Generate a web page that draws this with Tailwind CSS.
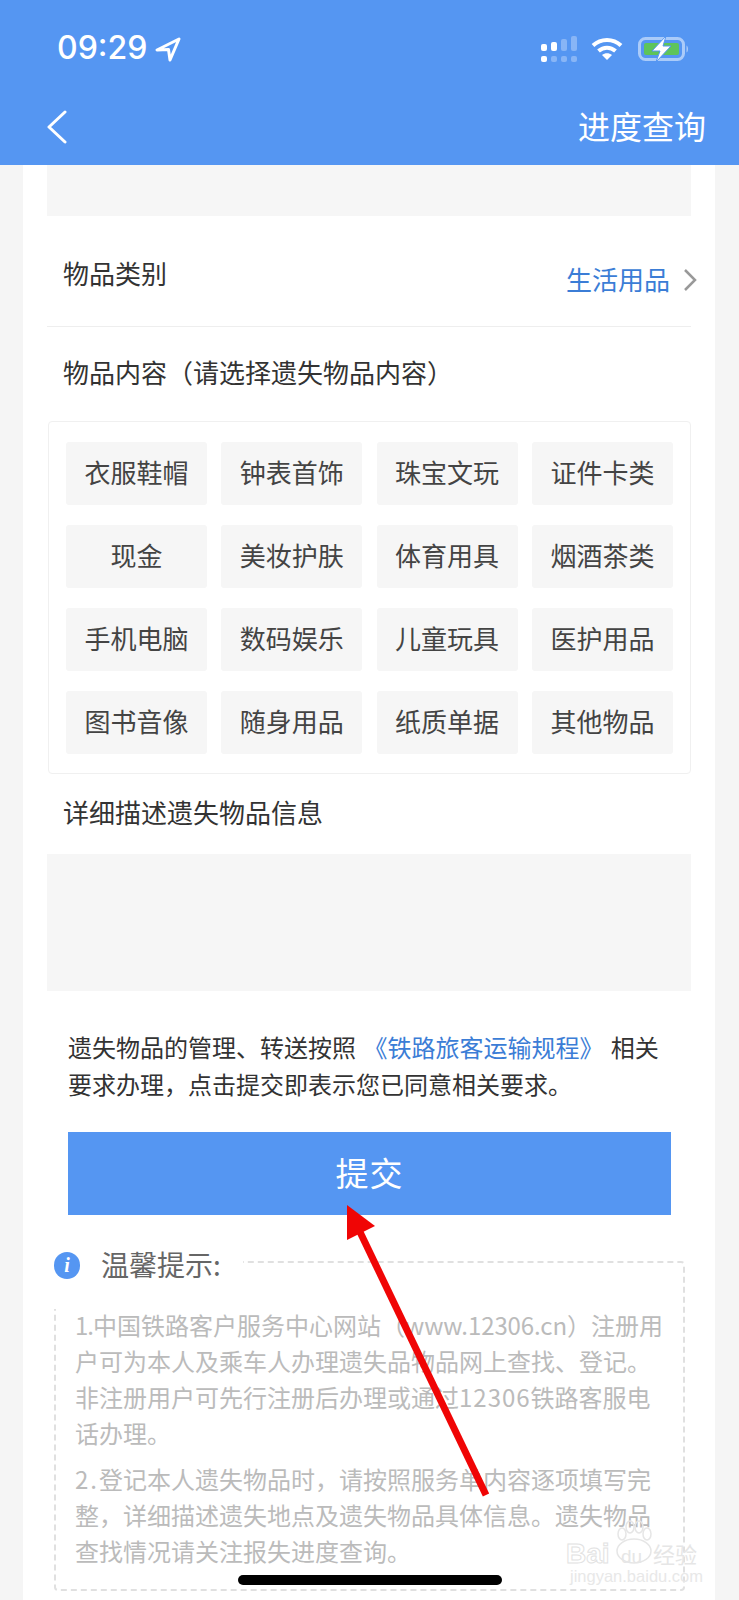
<!DOCTYPE html>
<html lang="zh-CN">

<head>
    <meta charset="UTF-8">
    <title>进度查询</title>
    <meta name="viewport" content="width=device-width, initial-scale=1.0">
    <script src="https://cdn.jsdelivr.net/npm/@tailwindcss/browser@4"></script>
</head>

<body class="bg-[#f5f5f5]">
    <div class="relative w-[739px] h-[1600px] overflow-hidden bg-[#f5f5f5] font-['Noto_Sans_CJK_SC','Noto_Sans',sans-serif]">

        <!-- header -->
        <header class="h-[165px] bg-[#5596f2] text-white">
            <div class="h-[98px] pl-[57px] pr-[50px] flex justify-between items-center">
                <div class="flex items-center gap-[8px]">
                    <span class="font-['Inter'] font-medium text-[32px] leading-none -mt-[2px]">09:29</span>
                    <svg width="26" height="26" viewBox="0 0 26 26" fill="none" stroke="white" stroke-width="3" stroke-linejoin="round">
                        <path d="M2 14 L24 3 L15 24 L13.5 13.5 Z" />
                    </svg>
                </div>
                <div class="flex items-center gap-[13px]">
                    <svg width="37" height="26" viewBox="0 0 37 26" fill="white">
                        <rect x="0" y="8" width="6" height="7" rx="2" />
                        <rect x="10" y="6" width="6" height="9" rx="2" />
                        <rect x="20" y="3" width="6" height="12" rx="2" fill-opacity=".3" />
                        <rect x="30" y="0" width="6" height="15" rx="2" fill-opacity=".3" />
                        <rect x="0" y="20" width="6" height="6" rx="2" />
                        <rect x="10" y="20" width="6" height="6" rx="2" fill-opacity=".3" />
                        <rect x="20" y="20" width="6" height="6" rx="2" fill-opacity=".3" />
                        <rect x="30" y="20" width="6" height="6" rx="2" fill-opacity=".3" />
                    </svg>
                    <svg width="32" height="24" viewBox="0 0 32 24" fill="none" stroke="white" stroke-width="4">
                        <path d="M2 8.5 C10 1 22 1 30 8.5" />
                        <path d="M7.5 14 C12.5 9.5 19.5 9.5 24.5 14" />
                        <path d="M11 18 L16 23 L21 18 C18 15.5 14 15.5 11 18 Z" fill="white" stroke="none" />
                    </svg>
                    <svg width="51" height="26" viewBox="0 0 51 26" class="ml-[2px]">
                        <rect x="1.5" y="2.5" width="44" height="21" rx="6" fill="none" stroke="white" stroke-opacity=".5" stroke-width="3" />
                        <rect x="6" y="7" width="35" height="12" rx="2" fill="#5ec45a" />
                        <path d="M48.5 9.5 C50.5 10.5 50.5 15.5 48.5 16.5 Z" fill="white" fill-opacity=".5" />
                        <path d="M28 0 L14 15 L22 15 L18 26 L33 10 L25 10 Z" fill="white" stroke="#5596f2" stroke-width="1" />
                    </svg>
                </div>
            </div>
            <div class="h-[67px] pl-[46px] pr-[33px] flex justify-between items-start">
                <svg width="22" height="34" viewBox="0 0 22 34" fill="none" stroke="white" stroke-width="3" stroke-linecap="round" stroke-linejoin="round" class="mt-[12px]">
                    <path d="M19 2 L3 17 L19 32" />
                </svg>
                <span class="text-[32px] leading-[58px] -mt-[2px]">进度查询</span>
            </div>
        </header>

        <!-- card -->
        <main class="mx-[23px] w-[692px] h-[1435px] bg-white px-[24px]">
            <div class="h-[51px] bg-[#f6f6f6]"></div>

            <div class="h-[111px] border-b border-[#eeeeee] flex justify-between">
                <span class="pl-[16px] pt-[32px] text-[26px] leading-[50px] text-[#333333]">物品类别</span>
                <div class="flex items-center gap-[13px] pt-[15px] -mr-[6px]">
                    <span class="text-[26px] text-[#3b7dd6]">生活用品</span>
                    <svg width="14" height="24" viewBox="0 0 14 24" fill="none" stroke="#999999" stroke-width="2.5" class="mt-[2px]">
                        <path d="M2 2 L12 12 L2 22" />
                    </svg>
                </div>
            </div>

            <div class="h-[90px] mb-[4px] pl-[16px] pb-[1px] flex items-center text-[26px] text-[#333333]">物品内容（请选择遗失物品内容）</div>

            <div class="h-[353px] ml-[1px] w-[643px] border border-[#f0f0f0] rounded-[4px] pl-[17px] pt-[20px] grid grid-cols-[repeat(4,141px)] auto-rows-[63px] gap-x-[14.3px] gap-y-[20px] text-[26px] text-[#444444]">
                <div class="bg-[#f6f6f6] rounded-[3px] pb-[5px] flex items-center justify-center">衣服鞋帽</div>
                <div class="bg-[#f6f6f6] rounded-[3px] pb-[5px] flex items-center justify-center">钟表首饰</div>
                <div class="bg-[#f6f6f6] rounded-[3px] pb-[5px] flex items-center justify-center">珠宝文玩</div>
                <div class="bg-[#f6f6f6] rounded-[3px] pb-[5px] flex items-center justify-center">证件卡类</div>
                <div class="bg-[#f6f6f6] rounded-[3px] pb-[5px] flex items-center justify-center">现金</div>
                <div class="bg-[#f6f6f6] rounded-[3px] pb-[5px] flex items-center justify-center">美妆护肤</div>
                <div class="bg-[#f6f6f6] rounded-[3px] pb-[5px] flex items-center justify-center">体育用具</div>
                <div class="bg-[#f6f6f6] rounded-[3px] pb-[5px] flex items-center justify-center">烟酒茶类</div>
                <div class="bg-[#f6f6f6] rounded-[3px] pb-[5px] flex items-center justify-center">手机电脑</div>
                <div class="bg-[#f6f6f6] rounded-[3px] pb-[5px] flex items-center justify-center">数码娱乐</div>
                <div class="bg-[#f6f6f6] rounded-[3px] pb-[5px] flex items-center justify-center">儿童玩具</div>
                <div class="bg-[#f6f6f6] rounded-[3px] pb-[5px] flex items-center justify-center">医护用品</div>
                <div class="bg-[#f6f6f6] rounded-[3px] pb-[5px] flex items-center justify-center">图书音像</div>
                <div class="bg-[#f6f6f6] rounded-[3px] pb-[5px] flex items-center justify-center">随身用品</div>
                <div class="bg-[#f6f6f6] rounded-[3px] pb-[5px] flex items-center justify-center">纸质单据</div>
                <div class="bg-[#f6f6f6] rounded-[3px] pb-[5px] flex items-center justify-center">其他物品</div>
            </div>

            <div class="h-[80px] pb-[6px] pl-[16px] flex items-center text-[26px] text-[#333333]">详细描述遗失物品信息</div>
            <div class="h-[137px] bg-[#f6f6f6]"></div>

            <p class="pt-[37px] pl-[21px] text-[24px] leading-[37px] text-[#333333] whitespace-nowrap">
                遗失物品的管理、转送按照 <span class="ml-[2px] mr-[2px] text-[#3b7dd6]">《铁路旅客运输规程》</span> 相关<br>要求办理，点击提交即表示您已同意相关要求。
            </p>

            <button class="block mt-[30px] ml-[21px] w-[603px] h-[83px] pb-[2px] bg-[#5596f2] text-white text-[33px] tracking-[1px]">提交</button>

            <!-- tips -->
            <div class="relative mt-[46px] ml-[7px] w-[631px] h-[330px] border-2 border-dashed border-[#e0e0e0] rounded-[4px] pt-[44px] pl-[19px] text-[24px] leading-[36px] text-[#bbbbbb] whitespace-nowrap">
                <div class="absolute -left-[3px] -top-[4px] w-[190px] h-[50px] bg-white"></div>
                <div class="absolute -left-[2px] -top-[12px] flex items-center gap-[21px] h-[28px]">
                    <span class="w-[26px] h-[27px] rounded-full bg-[#5596f2] flex items-center justify-center text-white text-[20px] font-bold italic font-['Liberation_Serif']">i</span>
                    <span class="text-[28px] leading-[28px] text-[#666666] -mt-[2px]">温馨提示:</span>
                </div>
                <p><span class="tracking-[-1px]">1.</span>中国铁路客户服务中心网站（<span class="tracking-[-0.1px]">www.12306.cn</span>）注册用<br>户可为本人及乘车人办理遗失品物品网上查找、登记。<br>非注册用户可先行注册后办理或通过<span class="tracking-[1px]">12306</span>铁路客服电<br>话办理。</p>
                <p class="mt-[10px]"><span class="tracking-[2px]">2.</span>登记本人遗失物品时，请按照服务单内容逐项填写完<br>整，详细描述遗失地点及遗失物品具体信息。遗失物品<br>查找情况请关注报失进度查询。</p>
            </div>
        </main>

        <!-- red annotation arrow -->
        <svg class="absolute left-0 top-0 pointer-events-none" width="739" height="1600" viewBox="0 0 739 1600">
            <path d="M360 1232 L486 1495" stroke="#f00505" stroke-width="7" fill="none" />
            <path d="M347 1205 L375 1226 L347 1240 Z" fill="#f00505" />
        </svg>

        <!-- watermark -->
        <div class="absolute left-[566px] top-[1520px] w-[136px] h-[66px] pointer-events-none">
            <svg class="absolute left-[46px] top-0" width="44" height="44" viewBox="0 0 44 44" fill="none" stroke="#e6e6e6" stroke-width="1.5">
                <ellipse cx="10" cy="14" rx="4" ry="6" />
                <ellipse cx="18" cy="7" rx="4" ry="6" />
                <ellipse cx="27" cy="7" rx="4" ry="6" />
                <ellipse cx="35" cy="14" rx="4" ry="6" />
                <ellipse cx="22" cy="31" rx="17" ry="12" />
            </svg>
            <span class="absolute left-0 top-[18px] text-[28px] leading-[32px] font-bold font-['Liberation_Sans'] text-transparent [-webkit-text-stroke:1px_#e2e2e2]">Bai</span>
            <span class="absolute left-[55px] top-[25px] text-[19px] leading-[24px] font-['Liberation_Sans'] text-[#e6e6e6]">du</span>
            <span class="absolute left-[87px] top-[19px] text-[22px] leading-[28px] text-[#e6e6e6]">经验</span>
            <span class="absolute left-[4px] top-[47px] text-[16.5px] leading-[18px] font-['Liberation_Sans'] text-[#e8e8e8]">jingyan.baidu.com</span>
        </div>

        <!-- home indicator -->
        <div class="absolute left-[238px] top-[1575px] w-[264px] h-[10px] rounded-full bg-black"></div>
    </div>
</body>

</html>
